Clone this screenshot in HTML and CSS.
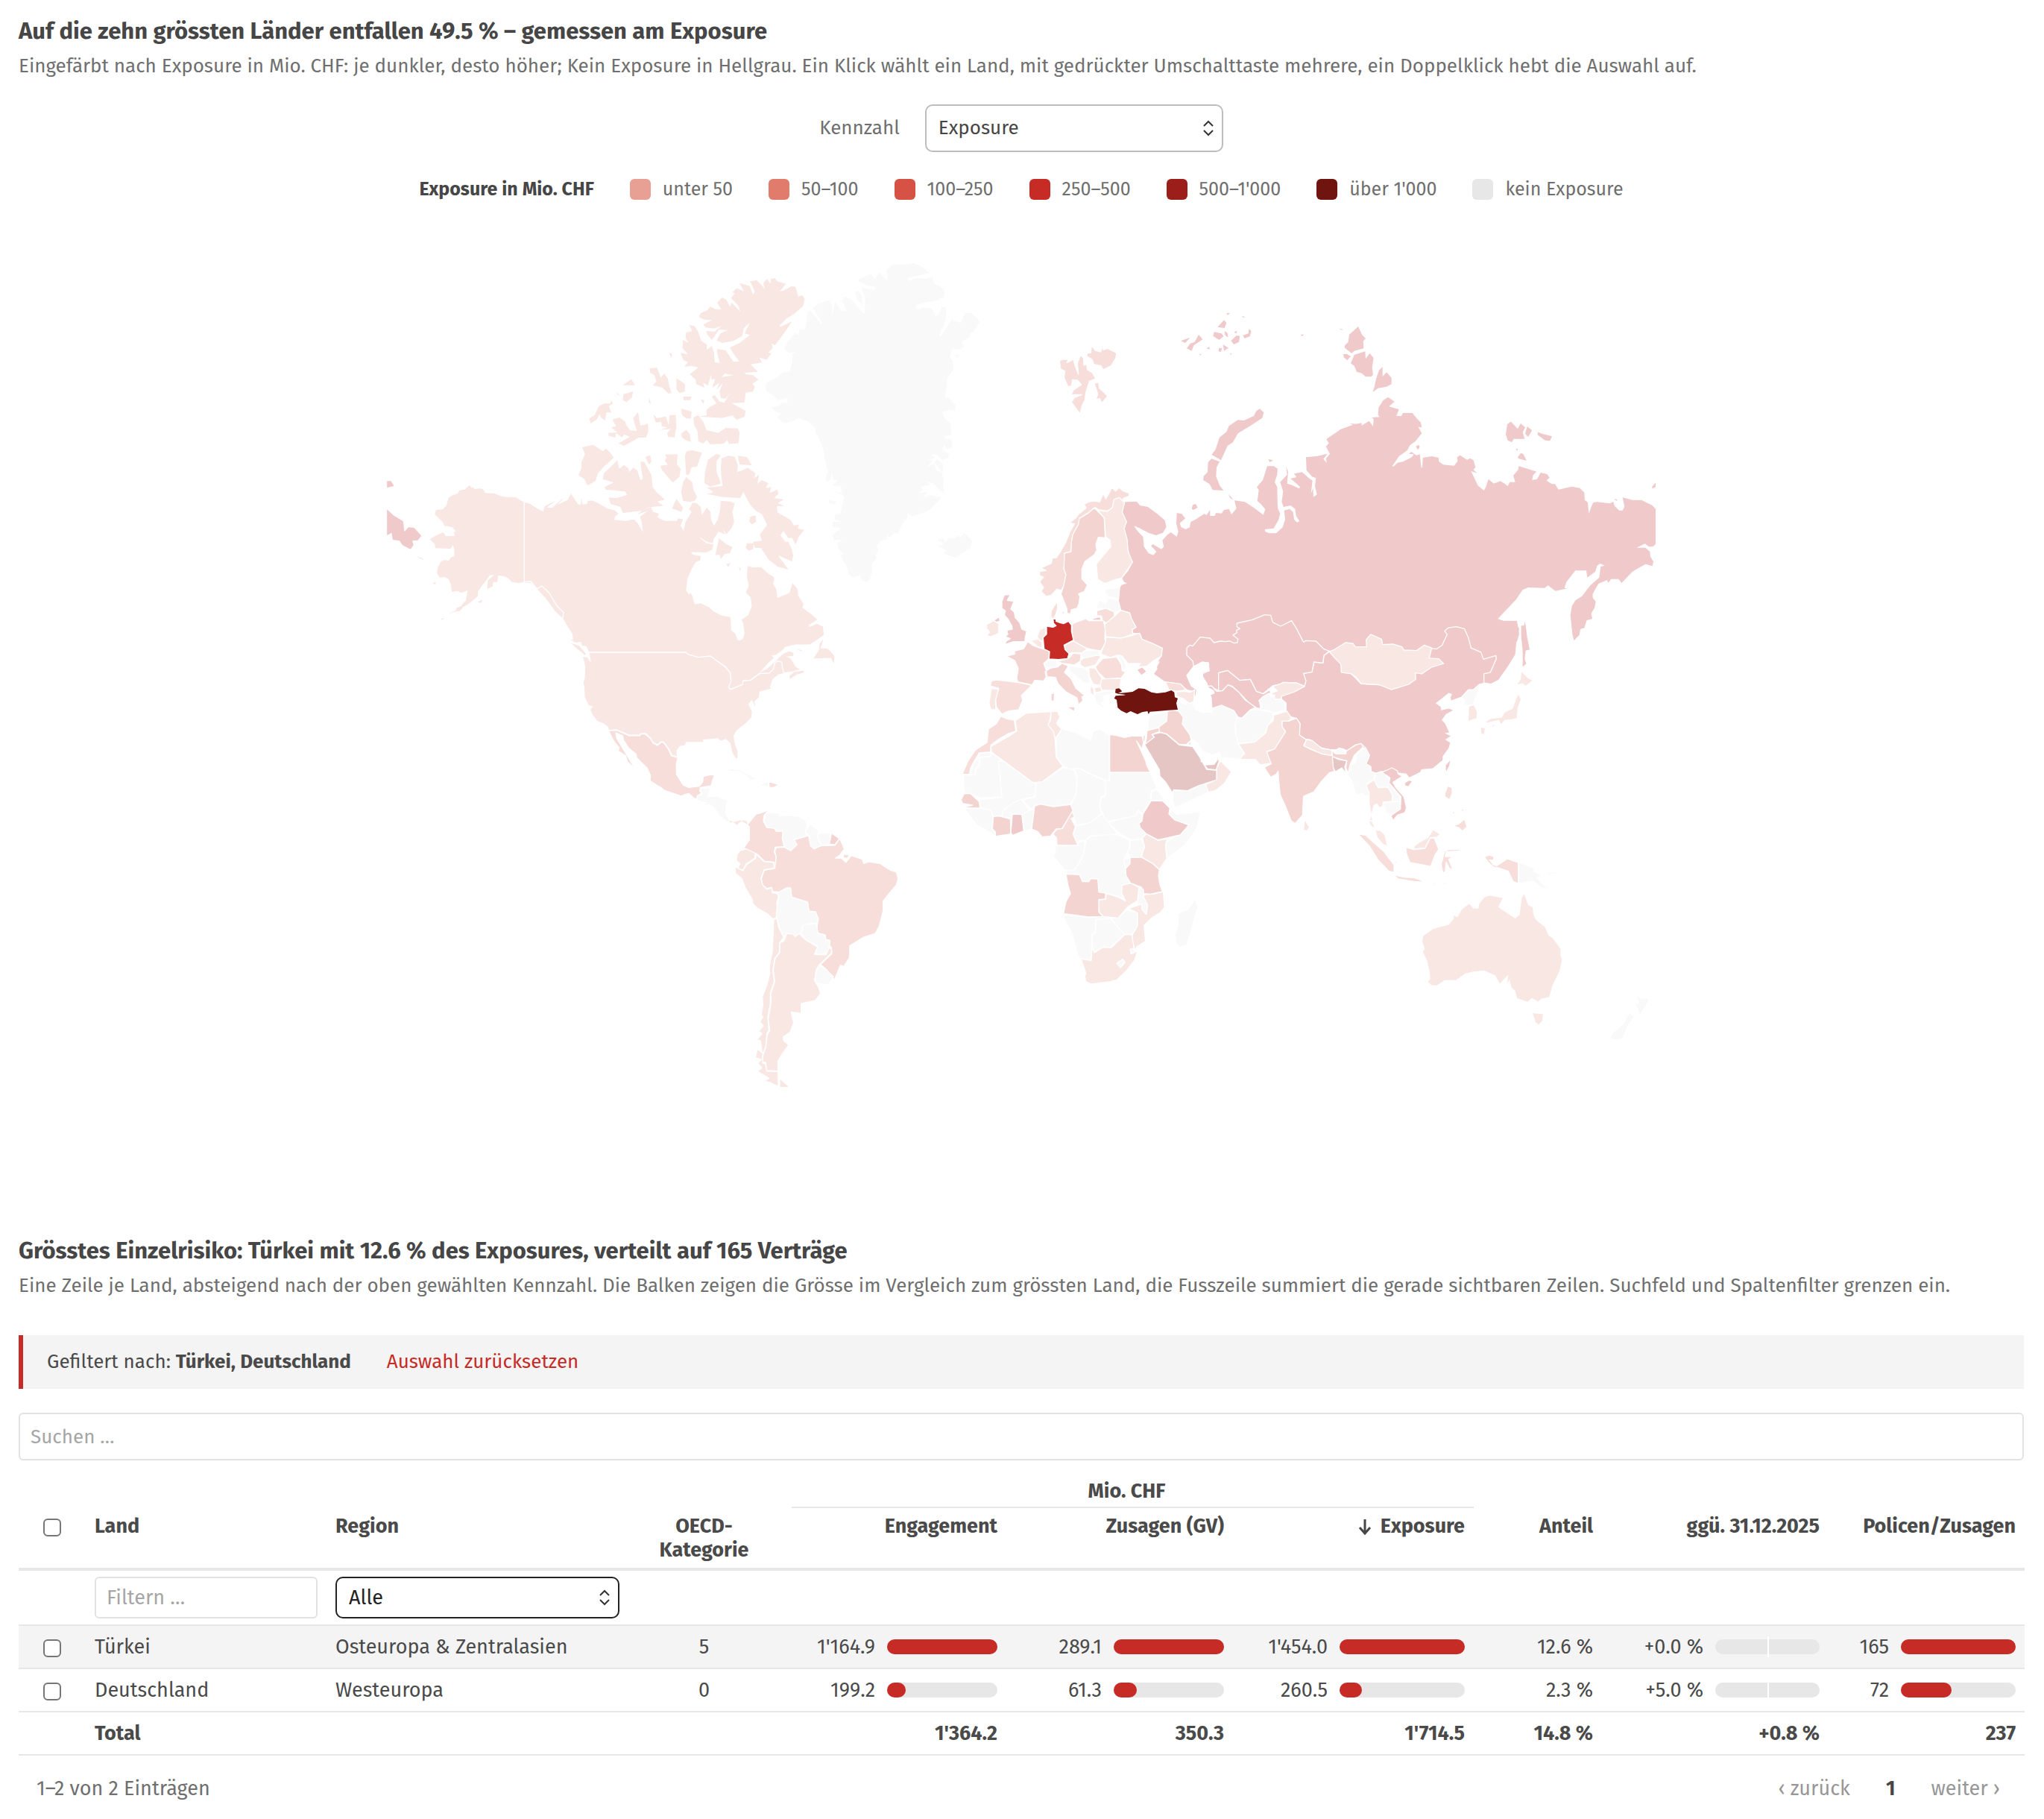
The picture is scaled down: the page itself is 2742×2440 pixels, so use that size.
FILE: index.html
```html
<!DOCTYPE html>
<html lang="de">
<head>
<meta charset="utf-8">
<title>Länderrisiken</title>
<link rel="stylesheet" href="styles.css">
</head>
<body>
<main class="page">
<section>
<h2 class="title">Auf die zehn grössten Länder entfallen 49.5 % – gemessen am Exposure</h2>
<p class="lead">Eingefärbt nach Exposure in Mio. CHF: je dunkler, desto höher; Kein Exposure in Hellgrau. Ein Klick wählt ein Land, mit gedrückter Umschalttaste mehrere, ein Doppelklick hebt die Auswahl auf.</p>
<div class="metric">
<label for="metric">Kennzahl</label>
<span class="select metric-select"><select id="metric"><option>Exposure</option></select><svg class="chev" viewBox="0 0 16 24"><path d="M2 9 8 3l6 6M2 15l6 6 6-6"/></svg></span>
</div>
<div class="legend">
<strong class="legend-title">Exposure in Mio. CHF</strong>
<ul class="legend-items">
<li><i class="swatch l1"></i>unter 50</li>
<li><i class="swatch l2"></i>50–100</li>
<li><i class="swatch l3"></i>100–250</li>
<li><i class="swatch l4"></i>250–500</li>
<li><i class="swatch l5"></i>500–1'000</li>
<li><i class="swatch l6"></i>über 1'000</li>
<li><i class="swatch l0"></i>kein Exposure</li>
</ul>
</div>
<svg class="map" viewBox="25 290 2690 1340" role="img" aria-label="Weltkarte nach Exposure">
<!-- Russia, mainland and islands -->
<g class="d flat" transform="translate(1380 380) scale(.33333)">
<path d="M388 880 400 880 434 878 448 894 480 900 520 930 548 954 554 980 540 1004 512 1014 482 1004 448 986 424 976 440 1000 460 1020 464 1060 482 1086 502 1094 514 1080 492 1056 500 1050 534 1070 544 1060 538 1034 560 1010 572 1002 596 1020 602 998 594 968 596 924 616 928 630 946 608 966 614 982 632 990 648 982 652 960 672 950 706 928 716 932 730 912 730 936 748 936 754 924 776 926 786 912 806 908 816 930 836 906 828 874 870 880 910 906 944 932 952 910 936 890 920 876 926 832 918 820 942 792 960 736 986 736 1002 746 1000 770 990 800 1000 820 1002 906 1012 926 1006 950 986 986 950 990 952 1000 970 1006 996 1006 1022 982 1032 950 1028 914 1050 908 1064 920 1068 950 1080 962 1090 958 1076 936 1072 908 1054 894 1026 900 1018 880 1024 838 1012 800 1040 770 1036 738 1044 760 1040 806 1060 812 1088 826 1092 820 1078 806 1054 786 1078 780 1068 766 1100 760 1130 786 1142 794 1136 846 1144 826 1146 860 1160 850 1152 816 1156 784 1140 778 1118 752 1116 700 1160 696 1202 686 1186 708 1200 722 1196 706 1212 686 1196 656 1208 644 1198 628 1214 616 1252 590 1280 580 1310 568 1340 562 1340 1500 440 1400 430 1380 412 1350 410 1330 400 1322 372 1314 364 1280 362 1240 370 1220 398 1210 382 1200 376 1186 400 1158 418 1124 402 1098 404 1080 394 1056 394 1030 384 986 394 960 376 936 376 910Z"/>
<path d="M612 232 650 218 630 240ZM684 206 700 226 664 250 656 272 636 262 650 242 668 236ZM760 176 786 148 796 160 788 180ZM746 196 776 202 784 214 766 228 742 212ZM788 192 800 200 802 218 790 208ZM814 232 836 210 850 212 846 236 826 246ZM862 210 884 202 886 184 896 192 890 214 868 222ZM782 246 804 260 786 272ZM766 260 778 262 774 276 764 274ZM796 120 810 120 800 128ZM716 262 726 256 730 266ZM826 196 838 192 836 202ZM686 286 696 284 692 290ZM810 282 818 282 814 288ZM858 132 872 136 864 138ZM1094 206 1108 206 1100 212ZM1248 182 1266 186 1260 188ZM1054 320 1066 324Z"/>
<path d="M930 505 946 520 940 542 888 576 842 604 822 640 800 654 784 690 774 712 736 690 752 668 768 620 796 598 806 574 842 550 866 552 906 534 916 514ZM736 706 768 718 756 740 754 778 770 816 784 834 740 832 728 808 702 792 704 776 720 760 722 720ZM804 848 824 872 810 864ZM660 892 672 888 680 902 664 912 656 908ZM964 708 984 712 970 720Z"/>
</g>
<g class="d flat" transform="translate(1800 400) scale(.33333)">
<path d="M-10 530 0 526 46 510 32 504 60 506 80 512 110 494 126 516 128 486 120 480 152 478 146 470 148 440 166 412 186 398 212 416 190 436 206 440 230 448 220 474 240 474 246 462 284 462 302 484 318 500 322 520 308 518 322 544 296 576 274 592 264 612 230 636 202 678 210 676 224 662 246 658 282 640 290 628 270 626 280 618 300 632 314 628 320 682 324 682 326 642 362 636 390 642 390 656 408 670 452 674 466 656 464 640 476 632 504 650 516 644 530 652 538 680 530 690 544 704 520 696 548 754 572 774 580 760 590 728 612 746 638 736 652 744 668 756 676 740 698 740 690 714 710 690 712 676 740 684 784 698 770 712 766 732 786 728 800 702 826 708 836 722 824 734 846 748 858 748 872 770 926 758 958 764 976 782 978 812 990 822 994 866 1004 840 1012 822 1028 820 1080 826 1092 818 1098 836 1116 854 1130 854 1138 838 1130 802 1170 812 1206 812 1250 834 1263 848 1263 990 1252 1000 1236 1000 1220 988 1186 1004 1222 1004 1240 1020 1242 1040 1254 1060 1250 1078 1222 1070 1170 1100 1126 1146 1114 1130 1084 1130 1072 1146 1068 1134 1034 1148 1026 1160 1010 1190 1010 1206 1022 1220 1018 1244 1004 1268 1008 1290 986 1296 976 1326 960 1332 956 1356 934 1376 926 1330 920 1276 926 1240 940 1216 966 1200 1000 1156 1036 1124 1042 1080 1058 1076 1040 1068 1028 1076 1020 1100 988 1124 984 1096 940 1096 904 1142 896 1166 908 1168 860 1178 830 1156 816 1166 750 1164 728 1174 700 1214 662 1254 628 1290 650 1298 652 1314 670 1320 684 1304 700 1308 714 1330 706 1380 -10 1380Z"/>
<path d="M66 114 82 148 96 162 86 174 88 202 50 212 40 222 12 200 12 190 26 176 30 146ZM6 226 20 224 36 234 22 250 8 238ZM36 262 50 228 94 214 96 244 112 222 128 240 122 280 126 308 118 316 96 316 80 302 60 296 50 272ZM150 290 164 276 164 316 180 298 200 320 200 346 180 356 146 362 124 378 132 354 138 324ZM680 496 708 526 720 504 738 520 728 540 736 566 692 566 684 580 668 572 660 548 666 508ZM746 516 766 532 750 558 738 546ZM790 538 800 544 846 556 838 574 818 572 788 550ZM708 640 720 624 730 626 744 654 712 646ZM1263 742 1248 760 1250 766 1263 760ZM298 596 310 590 314 600 306 610ZM700 606 708 606 706 616ZM1096 808 1108 810 1106 816ZM226 366 236 368ZM738 1302 742 1340 746 1384 728 1384 722 1350Z"/>
</g>
<g class="d flat" transform="translate(1270 780) scale(.33333)">
<path d="M722 8 704 14 694 30 692 50 694 80 704 114 736 124 746 150 762 184 746 196 750 206 780 210 786 232 830 250 868 268 866 300 850 322 858 322 846 344 848 352 834 372 852 384 886 408 914 410 950 422 970 436 982 438 1100 440 1100 0ZM768 356 786 346 802 362 784 376Z"/>
</g>
<path class="d flat" transform="translate(1570 800) scale(.33333)" d="M0 0H1030V300H300L100 400 84 376Z"/>
<g class="d flat" transform="translate(1790 840) scale(.33333 .3635)">
<path d="M300 -20 735 -20 744 30 732 62 728 104 700 146 660 198 630 212 604 208 300 120ZM752 -2 770 -2 776 40 786 86 770 90 766 120 772 138 758 150 758 90 752 40ZM956 -2 1006 -2 1006 6 988 8 986 24 966 52 958 30Z"/>
<path d="M0 120 -40 120 -40 440 0 450 122 448 140 462 142 490 128 506 150 520 160 540 192 534 232 524 256 540 290 544 302 558 346 538 350 528 396 524 436 494 436 480 460 450 466 430 446 418 468 406 444 394 462 392 446 360 432 346 450 324 478 310 460 304 430 310 428 298 408 284 430 268 460 246 474 250 468 262 470 274 512 260 540 234 560 234 584 214 602 208 602 176 628 170 652 120 650 108 600 122 590 96 550 80 540 44 524 10 492 2 458 6 444 18 454 30 434 70 412 84 396 82ZM284 580 300 570 312 572 298 590 286 588ZM466 496 462 516 450 536 448 514Z"/>
</g>
<!-- China west, Central and South Asia -->
<g transform="translate(1570 800) scale(.33333)">
<path class="d" d="M640 222 688 270 690 302 726 310 768 352 840 356 760 480 820 640 784 606 766 592 744 598 706 626 706 618 690 612 664 618 640 616 610 610 580 594 560 576 544 574 518 558 522 512 506 490 466 480 466 430 448 414 446 400 470 394 506 380 540 362 544 340 536 310 570 304 578 264 614 268 618 238Z"/>
<path class="d flat" d="M700 305 726 313 768 356 840 358 900 376 900 690 852 704 824 710 808 708 808 684 790 676 804 640 786 606 766 588 744 594 706 614 600 560 600 330Z"/>
<path class="d" d="M268 108 330 94 380 74 404 76 412 104 444 120 488 98 508 130 536 184 546 178 586 180 618 212 640 220 618 238 614 268 578 264 570 304 536 310 546 340 540 362 508 348 454 346 440 354 412 360 372 392 346 382 322 334 280 338 230 298 194 308 194 380 160 362 150 360 130 330 130 310 155 300 152 266 126 266 94 282 90 260 66 236 66 208 78 196 90 200 120 164 160 168 176 186 200 180 220 182 240 180 256 188 270 186 272 172 252 156 268 146 266 136 280 130 268 122Z"/>
<path class="d" d="M194 308 230 298 280 338 322 334 346 382 374 392 400 376 404 388 380 404 358 420 364 452 344 448 310 422 276 386 250 362 232 356 208 380 194 380ZM160 382 150 362 166 360 186 382 210 380 232 356 250 364 276 386 300 416 344 446 320 458 288 490 268 484 256 460 206 438 164 452Z"/>
<path class="a" d="M412 362 440 354 454 346 508 348 540 362 500 384 448 402 446 414 418 414 420 398 402 392 430 380Z"/>
<path class="n" d="M372 404 396 390 404 402 418 404 420 414 448 416 464 432 462 458 418 468 380 456 364 456 366 430 356 420ZM324 456 364 456 412 468 414 484 392 524 380 552 342 586 274 590 264 560 262 500 276 488 288 490Z"/>
<path class="a" d="M416 478 470 462 488 490 476 502 450 504 450 524 464 544 440 590 420 616 388 624 406 672 362 678 342 656 278 656 298 632 274 594 340 586 384 550 392 520 414 500Z"/>
<path class="n" d="M26 422 60 434 84 416 90 436 100 454 130 466 166 466 168 452 206 438 256 460 270 482 260 520 264 556 274 594 298 632 278 656 206 648 196 628 170 638 130 624 110 590 84 572 76 550 46 516 52 486 30 460Z"/>
<path class="c" d="M450 502 476 502 508 490 522 512 520 558 548 578 536 600 570 618 620 636 652 640 650 616 662 632 706 634 708 622 746 598 768 592 776 606 740 640 724 676 716 712 706 690 710 662 660 648 656 680 660 704 640 710 610 742 578 786 536 804 532 880 502 914 486 902 460 836 442 798 436 740 434 704 426 716 404 728 378 688 406 674 388 626 420 614 464 544 450 524Z"/>
<path class="a" d="M548 576 570 580 610 612 650 618 650 640 610 634 538 602ZM540 896 560 930 550 944 536 940Z"/>
<path class="n" d="M664 622 680 610 706 622 704 634 668 634Z"/>
<path class="e" d="M652 644 676 656 710 662 702 686 708 714 690 690 664 706 656 690Z"/>
<path class="n" d="M784 608 802 640 788 674 806 684 808 704 826 712 816 738 790 752 800 800 790 800 800 830 808 870 800 868 792 810 776 792 748 800 732 744 714 720 724 678 744 672 750 636Z"/>
<path class="n" d="M826 712 850 704 884 736 880 750 920 800 926 824 896 824 894 800 876 768 836 770 820 738ZM856 832 924 824 926 856 890 882 870 874Z"/>
<path class="a" d="M788 760 820 738 836 770 876 768 894 800 892 824 856 828 854 846 840 850 832 836 820 840 810 880 816 910 836 940 798 910 808 880 800 830 800 790Z"/>
<path class="d" d="M852 708 892 690 914 702 916 714 934 724 896 748 908 770 940 806 950 850 944 870 914 880 896 902 888 882 926 856 928 806 880 750 884 730Z"/>
<path class="a" d="M202 662 246 706 216 754 180 782 152 788 142 758 184 738 186 690Z"/>
<path class="e" d="M136 678 176 676 194 650 196 664 184 698 150 694Z"/>
</g>
<!-- Mongolia, East Asia and Oceania -->
<g transform="translate(1790 840) scale(.33333 .3635)">
<path class="line" d="M392 82 412 84 434 70 454 30 444 18 458 6 492 2 524 10 540 44 550 80 590 96 600 122 650 108 652 120 628 170 602 176 602 208"/>
<path class="a" d="M-20 94 0 86 46 60 76 64 84 76 130 76 128 50 146 30 190 48 194 68 236 66 272 76 280 88 330 90 362 70 392 80 382 118 420 120 440 138 390 152 352 176 326 172 328 196 300 214 230 234 180 216 108 212 90 190 68 176 28 170 26 140 0 116Z"/>
<path class="n" d="M512 262 540 234 560 234 584 214 580 240 556 290 520 294 524 276Z"/>
<path class="a" d="M540 296 562 290 576 316 574 340 538 352ZM752 166 780 190 800 200 770 222 756 212 732 218 748 196ZM740 246 752 270 740 300 736 340 720 344 686 348 670 364 662 348 600 360 628 340 672 336 686 316 716 304 730 270ZM588 372 608 376 604 400 590 398ZM622 374 648 358 644 370Z"/>
<path class="b" d="M456 590 474 596 474 616 464 640 486 652 446 630 444 620ZM474 684 486 686 478 696ZM508 672 520 676 518 688ZM484 706 490 694 486 710ZM454 660 464 668ZM476 736 500 730 524 712 534 740 516 756 502 744Z"/>
<path class="b" d="M94 766 126 772 168 806 200 832 214 850 240 880 240 908 220 904 176 862 140 810ZM240 918 280 926 320 928 344 936 362 944 320 942 256 932ZM366 944 380 946 378 950ZM390 948 410 946 408 952ZM420 948 452 946 448 952ZM434 962 450 966 448 970ZM498 968 512 960 506 970ZM288 816 320 824 364 820 386 782 402 782 410 800 420 824 406 842 388 886 340 878 304 872 290 838ZM444 830 460 824 512 824 500 830 450 832 446 850 478 850 460 860 478 900 462 892 450 870 446 908 436 908 430 880ZM530 880 542 882 536 886ZM560 878 594 880ZM552 816 560 826 554 830ZM604 852 622 844 642 850 640 864 624 862 640 880 654 884 696 858 740 872 740 950 720 942 700 904 660 892 640 888 620 872ZM240 862 252 872 246 876Z"/>
<path class="a" d="M320 812 344 796 376 780 398 750 426 768 414 778 386 780 366 818 322 822ZM164 752 186 754 204 770 214 812 196 806 172 780ZM150 716 166 748 148 738 138 722Z"/>
<path class="n" d="M742 872 800 890 806 906 834 920 816 928 846 958 872 972 836 966 800 940 742 950ZM850 910 886 908 900 894 888 914 860 916ZM514 960 540 950 524 962ZM944 918 950 924ZM1076 1114 1104 1136 1090 1128ZM1260 1074 1272 1076ZM412 716 436 698Z"/>
<path class="a" d="M764 984 782 1028 800 1036 802 1060 812 1082 850 1110 864 1140 880 1150 912 1190 912 1216 918 1230 908 1272 880 1326 866 1370 834 1376 820 1388 796 1374 778 1388 734 1374 726 1346 712 1336 704 1308 692 1330 698 1290 666 1322 646 1290 602 1272 560 1276 526 1284 490 1308 444 1308 412 1328 390 1326 374 1312 384 1302 382 1276 372 1236 354 1200 362 1190 352 1164 356 1142 396 1116 460 1100 478 1080 480 1064 494 1072 512 1044 544 1022 560 1040 578 1040 582 1022 604 998 626 992 680 1002 662 1036 728 1076 744 1064 752 1004ZM796 1426 842 1430 838 1458 822 1472 808 1462Z"/>
<path class="n" d="M1204 1330 1222 1364 1232 1374 1270 1376 1250 1406 1230 1436 1224 1418 1210 1396 1226 1388ZM1188 1426 1208 1440 1180 1478 1160 1520 1136 1528 1108 1520 1120 1500 1160 1470Z"/>
</g>
<!-- Scandinavia and Svalbard -->
<g transform="translate(1380 380) scale(.33333)">
<path class="b" d="M124 310 140 306 160 306 154 320 180 306 186 330 200 366 196 320 208 290 220 300 222 330 234 326 236 348 256 360 270 384 244 394 230 440 226 470 214 494 207 526 172 478 184 460 214 448 170 448 180 430 212 408 196 390 176 388 172 414 158 416 142 378 146 354 128 344ZM252 250 268 270 290 276 296 250 300 268 318 262 354 280 350 302 332 332 300 348 290 332 262 326 256 308 232 292 238 280 250 280ZM264 402 282 398 284 422 300 436 318 454 294 482 286 464 270 468 278 446Z"/>
<path class="b" d="M44 1160 70 1156 50 1146 92 1126 94 1106 112 1104 128 1080 150 1040 166 1000 184 968 164 964 190 944 200 930 232 904 222 890 240 880 262 876 286 880 300 846 310 868 326 840 334 822 350 836 364 822 380 836 404 844 404 856 380 866 386 880 364 864 344 870 336 904 316 916 284 912 264 904 236 926 204 946 202 976 178 1010 168 1080 146 1086 142 1150 150 1172 146 1210 130 1236 114 1230 90 1256 70 1260 50 1240 60 1224 44 1200 60 1182 44 1176Z"/>
<path class="c" d="M264 904 304 944 308 1024 280 1022 270 1050 274 1074 264 1092 226 1120 214 1150 214 1190 236 1214 224 1240 200 1250 206 1260 202 1290 194 1308 172 1314 168 1330 154 1328 154 1310 130 1250 140 1220 150 1172 142 1150 144 1086 170 1080 172 1040 178 1010 200 970 204 946 238 926ZM230 1276 238 1272 232 1286Z"/>
<path class="a" d="M268 902 284 914 316 918 336 904 344 870 364 862 386 884 376 920 394 960 384 986 396 1030 400 1080 418 1122 374 1186 350 1192 306 1208 278 1192 272 1130 330 1060 328 1034 310 1022 304 944Z"/>
<path class="n" d="M310 1230 366 1224 362 1270 320 1262 306 1240ZM274 1308 276 1290 288 1276 310 1290 322 1266 360 1276 370 1316 346 1326 322 1310Z"/>
</g>
<!-- Europe -->
<g transform="translate(1270 780) scale(.33333)">
<path class="b" d="M506 170 560 150 572 158 630 158 638 190 636 232 640 244 620 280 566 270 510 240 504 204ZM604 118 640 108 674 122 674 144 644 168 626 156 624 140 604 136ZM444 322 490 310 510 288 540 292 538 320 514 336 470 330ZM628 310 684 304 704 336 706 358 720 364 702 388 640 394 610 366 598 344ZM880 404 940 412 964 436 924 442 894 434ZM180 400 200 396 286 406 342 418 300 460 306 476 290 516 246 522 222 534 200 506 196 470 210 430 176 420ZM420 120 444 80 446 106 440 130 430 150 420 144ZM462 126 472 118 474 134Z"/>
<path class="a" d="M474 258 510 240 566 272 542 288 510 286 490 290 478 276ZM180 430 208 434 196 480 198 516 178 516 170 490ZM188 158 210 170 208 210 176 222 160 218 172 204 162 190 160 174ZM364 222 374 194 400 184 398 212 386 240 374 236ZM338 238 366 232 384 244 384 268 366 262ZM674 140 700 116 736 126 744 150 762 184 746 194 750 212 700 228 640 222 636 172ZM640 240 640 224 700 228 750 216 776 208 786 232 830 250 868 268 864 300 830 320 806 340 770 346 780 330 730 330 704 300 686 296 660 306 620 292ZM538 318 556 306 600 296 622 300 598 336 556 348 536 334ZM572 348 596 348 624 388 618 418 590 414 574 380ZM624 392 702 390 696 430 666 440 624 436 618 416ZM578 418 592 432 592 462 578 448ZM594 428 620 424 624 442 598 448ZM924 444 958 442 980 446 998 436 994 484 976 490 950 470 924 462Z"/>
<path class="n" d="M544 288 568 276 616 278 616 294 556 308 540 300ZM392 330 410 316 440 318 446 340 424 350 396 344ZM688 296 706 300 724 344 708 360 704 330ZM494 340 556 348 572 366 576 410 560 412 490 356ZM594 462 600 448 660 438 676 446 650 456 630 460 636 480 620 490 640 510 620 504 602 488Z"/>
<path class="c" d="M326 242 352 260 412 280 412 310 390 330 400 356 404 380 390 400 354 398 344 416 286 404 282 390 288 350 274 318 240 300 274 292 272 280 310 270ZM396 362 420 348 446 344 464 330 490 340 482 352 474 366 500 390 520 430 556 460 544 464 548 480 530 496 524 468 480 444 448 412 438 386 412 384 400 384ZM482 504 516 504 514 524ZM420 452 434 448 432 482 420 480ZM426 420 434 418 430 434Z"/>
<path class="d" d="M232 54 256 52 244 76 270 80 258 110 272 124 276 146 294 166 302 192 322 200 316 226 314 242 270 242 232 254 240 240 256 230 236 222 246 212 242 196 264 192 262 178 246 150 232 136 236 118 222 108 222 80ZM190 156 212 142 214 160 200 164ZM584 150 616 142 622 156 590 156Z"/>
</g>
<!-- Africa and the Middle East -->
<g transform="translate(1270 940) scale(.33333)">
<path class="n" d="M62 298 94 296 110 250 130 228 130 212 178 208 178 224 132 226 130 262 116 270 114 296ZM66 300 116 298 118 270 132 262 132 228 178 224 180 210 230 242 208 244 222 386 136 392 98 374 72 372ZM180 208 346 328 358 332 356 386 304 396 268 410 230 440 220 462 188 466 176 440 140 436 130 400 222 388 208 244 228 240ZM360 330 386 324 470 268 510 278 526 300 520 380 496 416 430 424 376 416 354 422 340 436 304 400 354 388ZM512 278 530 272 640 324 638 382 620 390 616 430 624 454 580 490 530 502 518 490 500 420 520 380 524 310ZM656 290 820 290 846 352 822 366 822 400 800 430 786 456 770 438 758 464 700 476 642 486 614 420 622 386 638 382 640 322 654 320ZM650 490 700 476 760 462 772 440 786 462 780 500 804 536 780 558 740 560 690 530ZM440 150 464 112 520 128 580 158 590 122 616 114 654 138 654 320 640 322 530 270 500 276 468 262 442 226Z"/>
<path class="n" d="M68 432 136 432 176 440 186 466 182 516 194 526 194 544 150 514 120 500 86 452ZM222 460 230 440 268 410 300 396 330 440 304 458 262 456 260 472 226 468ZM304 458 340 438 354 440 342 516 312 524ZM520 504 580 490 624 456 688 536 640 540 580 546 560 562 528 570 510 540ZM440 582 528 582 530 564 556 562 552 616 530 660 512 680 478 684 430 628ZM562 560 580 542 680 538 736 560 738 590 712 640 722 700 738 732 708 742 704 770 722 804 690 786 640 774 612 770 608 716 580 716 572 728 548 726 536 698 480 696 480 682 516 680 550 618ZM740 562 784 556 796 582 784 628 738 630 730 610ZM824 366 846 356 900 430 870 402 822 400ZM908 440 926 458 1022 446 1008 510 960 580 886 632 882 570 920 546 940 540 978 500 920 482 896 456ZM712 640 738 632 736 658 720 674ZM470 862 570 872 650 868 658 876 598 880 598 934 584 938 582 1046 540 1038 528 1024 506 940 474 880ZM600 882 660 876 696 920 716 938 660 992 628 990 594 1012 586 986 586 938 598 934ZM662 876 690 872 726 842 768 854 768 906 746 942 714 938 690 914ZM1000 796 1012 836 1002 856 980 940 966 984 942 990 922 978 918 940 932 900 930 858 974 836ZM908 362 970 362 1012 342 1040 334 1054 368 960 412 918 432 910 400ZM814 62 888 40 886 82 852 106 820 120 808 122Z"/>
<path class="b" d="M218 62 240 72 272 78 278 122 248 132 210 154 178 178 176 206 130 210 110 244 96 270 92 296 62 296 86 242 116 198 162 168 168 114 200 92ZM504 442 514 468 500 474 518 506 508 536 528 582 444 580 442 552 428 536 444 516 466 514Z"/>
<path class="a" d="M276 80 320 50 420 44 416 74 408 98 430 124 436 156 440 226 468 264 384 326 348 330 180 206 178 184 248 144 282 122ZM420 44 446 42 456 66 442 90 462 114 438 152 428 122 408 98 418 76ZM788 552 804 536 850 562 888 556 880 580 886 634 856 678 830 656 784 628 796 588ZM706 742 742 734 774 752 768 804 730 828 690 874 630 868 614 850 612 802 640 798 642 776 690 790 720 806 704 774ZM792 780 830 778 872 768 876 832 860 852 830 870 794 904 800 968 764 990 756 1012 746 944 768 906 768 854 732 836 784 818 800 858 808 832 792 800ZM540 1038 582 1046 586 988 594 1014 628 992 662 994 716 942 744 940 756 1000 766 1014 756 1044 724 1086 686 1122 660 1130 582 1140 560 1130 556 1108 560 1096ZM966 170 986 166 984 182Z"/>
<path class="c" d="M70 374 96 374 130 406 134 432 66 430 104 420 64 414 58 398ZM188 466 210 464 256 476 258 536 196 546 196 528 184 516ZM354 424 376 416 430 426 498 418 508 440 486 478 464 514 440 516 418 544 384 548 366 526 342 516ZM738 630 784 630 830 656 856 680 852 704 858 740 868 768 820 778 792 776 784 750 740 734 722 704 720 676 738 656ZM480 698 534 700 546 728 572 728 580 716 608 718 612 770 640 774 638 798 612 800 612 850 628 868 570 870 480 858 470 858 480 808 498 776 488 740ZM656 136 684 140 716 148 742 142 786 142 792 166 786 194 764 162 800 240 806 262 820 288 656 288ZM888 42 912 38 934 42 952 66 948 94 978 136 984 158 964 176 936 176 886 134 856 126 854 106 886 82ZM806 120 854 108 856 124 826 136 838 152 798 176 804 150ZM792 138 800 136 796 170 790 160Z"/>
<path class="d" d="M264 456 302 458 310 524 264 542 258 530 262 490ZM822 404 836 402 870 404 898 432 894 456 918 480 974 500 940 540 886 552 850 560 804 536 780 512 774 494 786 484 790 456Z"/>
<path class="e" d="M796 176 836 146 826 136 860 128 884 134 936 178 990 184 1020 230 1046 276 1086 280 1086 318 1012 342 970 362 914 358 908 370 880 326 858 304 856 278ZM1024 230 1030 236 1024 246Z"/>
<path class="n" d="M776 750 792 760 792 790 808 820 804 860 786 840 784 820 766 818ZM684 1056 708 1040 718 1052 700 1074ZM738 1000 750 996 756 1014 742 1018Z"/>
</g>
<!-- Caspian Sea -->
<path class="sea" transform="translate(1570 800) scale(.33333)" d="M66 318 92 284 128 264 154 268 156 300 130 304 128 320 148 352 150 366 174 380 176 390 160 396 150 394 164 404 168 460 130 468 104 456 92 436 102 406 106 376 84 360Z"/>
<!-- Selected countries -->
<g transform="translate(1270 780) scale(.33333)">
<path class="t flat" d="M680 432 694 430 706 442 690 450 716 448 748 444 772 430 796 432 824 446 846 450 880 446 904 438 916 446 918 466 930 470 924 490 930 516 890 518 848 522 818 524 812 534 808 522 786 526 768 534 740 522 724 530 702 520 688 508 684 476 674 470 680 460 712 458 720 456 690 452 678 448Z"/>
<path class="g" d="M428 150 440 152 440 160 456 166 470 170 490 160 502 176 502 200 510 236 472 256 476 274 492 290 486 310 450 314 412 312 414 282 392 272 388 226 402 212 402 180 428 184 440 178 430 168Z"/>
</g>
<!-- Greenland and Iceland -->
<g class="n flat" transform="translate(1000 340) scale(.33333)">
<path d="M566 70 590 44 640 44 680 38 710 54 742 78 700 88 654 98 658 112 690 98 724 102 752 94 760 124 784 132 802 156 796 176 770 190 720 198 688 206 690 226 720 218 750 222 766 252 780 240 790 216 808 216 806 268 780 328 784 338 832 262 840 272 866 280 884 240 910 240 944 272 918 314 904 320 904 336 870 356 880 374 860 388 832 384 822 418 836 432 838 466 810 506 810 536 802 580 820 580 846 612 846 634 820 628 790 640 806 668 824 680 830 730 796 738 812 748 828 746 834 778 812 788 798 768 792 790 820 808 816 820 794 830 768 810 748 806 764 824 720 832 754 832 732 858 760 846 768 872 794 884 760 840 772 828 796 850 792 886 798 910 794 940 800 962 788 960 760 928 724 914 742 930 702 940 716 950 698 964 730 960 716 984 740 972 790 982 768 1004 736 1036 670 1058 652 1046 650 1066 636 1082 614 1126 600 1124 578 1144 568 1124 572 1148 542 1156 526 1180 536 1190 524 1214 528 1228 508 1248 510 1276 500 1310 486 1324 470 1316 460 1296 436 1304 414 1290 412 1268 402 1252 382 1214 396 1210 374 1190 370 1164 390 1150 358 1156 350 1130 384 1106 350 1098 352 1080 390 1080 358 1070 360 1052 384 1046 388 1020 396 982 384 968 344 952 388 966 384 936 350 934 372 912 356 912 346 880 346 906 326 922 324 900 334 880 328 860 316 820 314 790 306 766 282 718 284 704 250 676 210 662 196 674 160 682 148 678 128 660 144 646 120 636 104 620 136 612 150 600 168 606 170 580 130 590 110 570 84 556 80 530 94 514 126 500 154 478 178 474 188 440 190 404 200 396 178 400 158 388 164 364 184 342 200 318 214 330 218 304 240 306 246 270 250 234 262 230 306 286 308 280 272 218 300 200 336 188 348 206 350 256 360 196 388 234 408 230 388 190 400 172 430 188 474 242 480 240 482 176 466 138 520 148 524 134 490 128 454 112 456 104 504 82 520 102 540 74 568 110 574 90ZM442 156 454 150 470 172 470 206 448 182ZM334 990 370 1000 356 1010 334 1002ZM842 412 858 404 856 422Z"/>
<path d="M780 1136 800 1150 804 1164 820 1144 846 1146 858 1134 864 1146 880 1124 912 1156 908 1184 846 1224 796 1208 808 1196 774 1176 800 1170 772 1152 794 1146Z"/>
</g>
<!-- Alaska, Canada and the Arctic islands -->
<g class="a flat" transform="translate(500 340) scale(.40816 .33333)">
<path d="M498 1002 515 1006 540 1026 560 1038 566 1016 600 996 572 1022 590 1024 620 990 628 984 606 1012 640 992 652 966 664 990 676 1010 684 1010 686 984 690 1010 704 1008 706 996 722 994 746 1008 770 1026 796 1034 808 1048 796 1058 794 1072 830 1076 858 1070 870 1084 888 1122 884 1080 878 1060 904 1036 890 1042 870 1050 884 1036 914 1020 922 1040 940 1046 936 1062 960 1076 1000 1076 1004 1066 1020 1070 1012 1096 1022 1116 1028 1080 1048 1040 1040 1030 1050 1004 1064 1004 1078 1020 1082 1052 1098 1022 1110 1040 1112 1070 1122 1096 1134 1070 1142 1030 1144 996 1176 998 1190 1006 1182 1040 1188 1080 1180 1104 1162 1130 1150 1106 1158 1130 1136 1120 1128 1136 1120 1150 1118 1166 1098 1160 1074 1140 1080 1150 1098 1166 1120 1170 1116 1192 1096 1204 1072 1202 1046 1202 1052 1212 1078 1218 1076 1236 1062 1242 1048 1270 1034 1310 1030 1356 1040 1374 1044 1364 1052 1382 1058 1412 1078 1408 1106 1424 1120 1440 1144 1456 1176 1464 1178 1516 1192 1530 1200 1560 1216 1552 1222 1530 1218 1490 1212 1474 1234 1456 1246 1420 1242 1384 1226 1364 1236 1338 1230 1300 1232 1258 1250 1264 1276 1262 1300 1288 1320 1304 1316 1330 1326 1350 1330 1386 1350 1376 1370 1366 1380 1326 1396 1350 1398 1376 1416 1410 1412 1426 1440 1450 1462 1474 1434 1494 1434 1504 1460 1490 1480 1502 1482 1536 1450 1564 660 1564 656 1530 640 1500 626 1470 600 1440 570 1390 540 1350 520 1326 498 1324Z"/>
<path d="M318 932 326 944 330 940 334 948 350 946 362 948 370 964 400 966 420 976 440 980 472 982 484 992 498 1002 498 1322 480 1326 458 1322 444 1306 430 1298 412 1296 410 1322 396 1322 394 1340 376 1350 378 1316 400 1292 384 1296 372 1318 362 1332 346 1360 346 1378 330 1396 312 1412 296 1424 288 1438 262 1444 248 1456 260 1442 274 1436 276 1426 290 1420 298 1406 306 1398 312 1356 290 1366 280 1358 260 1362 256 1330 250 1310 236 1302 220 1304 211 1286 214 1264 224 1240 236 1234 250 1236 256 1224 268 1218 268 1190 264 1174 256 1188 206 1186 204 1170 188 1150 206 1136 232 1122 240 1138 270 1136 266 1120 274 1120 262 1102 236 1096 228 1078 204 1050 208 1032 230 1030 242 1014 250 982 264 972 280 966 284 954 302 950ZM222 1472 236 1466 230 1474ZM142 1220 160 1224 170 1234ZM196 1326 208 1322 206 1332ZM344 1404 362 1392 356 1406Z"/>
<path d="M1206 120 1238 130 1250 164 1256 154 1240 112 1262 108 1280 130 1288 144 1284 118 1296 102 1308 122 1308 102 1322 100 1330 112 1358 122 1338 152 1350 150 1376 132 1390 134 1398 174 1412 168 1420 184 1414 212 1384 244 1360 262 1336 292 1342 294 1378 274 1350 324 1322 370 1312 362 1314 382 1300 398 1310 402 1294 428 1270 418 1280 438 1242 446 1266 476 1222 480 1226 486 1250 490 1268 508 1248 524 1256 536 1250 556 1226 560 1222 600 1180 602 1226 634 1222 656 1196 670 1182 652 1148 662 1120 660 1072 656 1098 652 1096 630 1110 616 1130 604 1114 576 1124 570 1140 596 1156 600 1174 560 1160 584 1144 582 1140 556 1150 522 1130 548 1140 520 1116 540 1126 502 1186 490 1166 486 1150 480 1142 450 1132 400 1132 384 1160 390 1186 436 1204 434 1184 400 1174 378 1206 360 1240 328 1222 322 1240 278 1220 300 1214 332 1186 352 1150 360 1130 350 1144 320 1168 308 1138 306 1120 340 1114 348 1100 326 1096 312 1124 314 1146 292 1122 302 1094 298 1086 286 1116 268 1090 266 1072 256 1078 240 1100 228 1110 214 1126 224 1146 226 1132 198 1148 178 1162 186 1174 214 1180 198 1210 236 1200 208 1178 180 1190 160 1182 156 1196 140 1220 152Z"/>
<path d="M1040 288 1058 292 1068 312 1080 352 1098 366 1098 388 1114 372 1122 400 1124 438 1140 440 1150 466 1160 480 1146 498 1114 508 1112 486 1102 532 1086 520 1090 540 1064 526 1060 506 1042 486 1070 458 1046 452 1024 456 1036 438 1020 428 1012 400 1036 406 1018 380 1020 348 1038 360 1028 340 1030 318 1050 312Z"/>
<path d="M910 462 934 460 942 482 946 500 958 484 970 504 974 530 982 562 972 564 952 540 920 530 932 516 926 490 912 480ZM998 502 1026 524 1026 556 1008 562 998 546ZM974 400 984 404 982 422ZM822 530 850 506 862 530ZM824 566 856 556 852 580 834 598 822 590ZM802 558 812 572 804 568ZM1020 576 1048 576 1044 590 1022 590ZM1078 586 1090 592 1086 606ZM906 578 916 606 908 600ZM784 592 790 604 776 614 784 640 768 640 764 672 750 660 746 646 736 668 716 684 712 664 730 650 742 616 760 604 780 604ZM788 668 810 660 830 676 832 688 846 712 868 714 862 690 856 664 872 638 876 670 880 692 894 690 904 684 906 716 898 740 872 742 850 758 826 774 808 764 830 748 846 738 826 728 820 740 800 724 798 740 776 734 774 722 804 720 784 700 800 696ZM922 648 934 662 964 656 972 690 976 650 996 650 998 700 992 740 970 738 968 722 980 706 944 710 970 700 950 696 948 678 930 680ZM1016 740 1014 724 1030 710 1042 726 1046 758 1030 752ZM1014 624 1048 636 1046 664 1030 664 1016 650ZM1054 660 1070 650 1088 680 1096 710 1136 722 1160 702 1200 704 1206 720 1202 764 1170 766 1166 750 1154 766 1108 768 1098 750 1086 764 1070 756 1068 716 1056 690Z"/>
<path d="M688 780 724 770 742 784 756 796 766 786 780 800 792 822 758 860 740 886 732 916 706 934 696 908 676 892 686 866 686 840 698 808ZM804 832 810 866 826 852 840 864 844 880 856 862 870 874 880 912 888 906 884 880 880 838 892 838 906 870 916 890 920 940 934 962 960 990 936 998 956 1016 930 1018 908 1022 884 1036 822 1044 814 1020 782 1008 776 982 800 984 836 972 830 958 766 950 762 940 792 922 756 908 760 884 790 850ZM896 818 912 812 916 838 908 850ZM960 834 966 822 960 810 1002 808 1000 850 1012 866 1008 900 986 922 970 900 950 870 946 854 970 850ZM1032 796 1050 792 1082 802 1066 858 1048 860 1040 890 1030 890 1026 812ZM1030 900 1050 920 1054 950 1066 980 1058 996 1044 1000 1020 996 1014 960 1020 920ZM998 988 1020 1024 1014 1040 984 1026Z"/>
<path d="M1130 806 1144 812 1130 836 1130 880 1140 910 1144 926 1110 938 1090 924 1092 880 1102 830ZM1146 824 1170 814 1190 818 1200 852 1198 880 1220 870 1232 862 1258 884 1254 904 1270 890 1264 928 1278 912 1300 924 1292 944 1310 940 1304 964 1330 950 1334 966 1320 984 1350 990 1332 1004 1352 1016 1328 1018 1330 1042 1356 1060 1374 1074 1384 1094 1400 1092 1398 1108 1418 1112 1400 1140 1390 1172 1378 1144 1366 1146 1350 1116 1340 1134 1356 1160 1366 1160 1376 1186 1382 1214 1378 1240 1332 1214 1366 1272 1330 1260 1300 1230 1284 1200 1276 1186 1256 1184 1250 1160 1280 1156 1272 1132 1296 1092 1280 1050 1260 1036 1240 1010 1218 960 1208 984 1150 980 1100 968 1120 960 1098 942 1150 936 1146 900 1144 870ZM1200 814 1230 820 1246 852 1206 850ZM1240 1060 1258 1054 1260 1080 1246 1090 1238 1080ZM1230 1166 1252 1166 1250 1190 1236 1196 1226 1184ZM1138 1146 1160 1168 1182 1182 1174 1206 1156 1210 1144 1230 1140 1212 1126 1214ZM1162 1250 1176 1246 1168 1262ZM1204 1262 1210 1268 1206 1278Z"/>
<path class="line" d="M498 1002V1322L520 1320 540 1350 556 1338 580 1366 604 1416 628 1446 622 1480"/>
<path class="d flat" d="M47 1030 68 1054 100 1078 104 1120 118 1102 136 1104 160 1136 148 1154 130 1156 134 1174 124 1190 98 1174 88 1156 66 1152 62 1124 47 1134ZM47 916 60 916 70 936 47 942Z"/>
</g>
<!-- United States to Tierra del Fuego -->
<g transform="translate(740 840) scale(.33333 .40816)">
<path class="a flat" d="M76 44 100 54 118 50 122 64 140 66 150 84 540 84 550 92 590 102 640 98 700 132 720 152 724 176 712 200 722 206 768 190 770 178 800 176 836 154 870 122 894 104 884 96 904 94 930 78 940 68 980 60 1040 60 1066 44 771 44 765 52 748 44ZM834 154 866 140 900 116 930 92 956 82 974 88 972 98 944 100 960 104 974 122 980 132 1000 142 970 148 936 152 900 154ZM1094 42 1082 72 1112 74 1138 98 1136 124 1124 104 1054 106 1076 78 1078 58ZM956 164 976 150 1014 146 1016 152 984 160 960 174ZM982 72 1008 80 1004 82ZM78 56 110 64 140 92 132 94 100 72Z"/>
<path class="a" d="M150 86 540 86 548 92 590 102 638 98 696 132 718 152 722 180 712 200 720 208 768 192 770 180 800 178 836 156 876 154 892 142 898 122 908 114 926 118 930 142 936 156 914 160 892 174 880 200 886 206 838 216 836 234 818 248 822 262 816 264 806 244 794 256 808 280 806 300 782 320 748 342 734 360 738 384 750 410 750 432 742 438 726 416 718 386 700 372 680 378 668 370 640 372 610 374 614 382 576 382 542 382 538 392 516 396 504 410 506 430 484 424 472 404 450 380 438 380 426 390 408 382 398 368 378 352 356 354 354 358 312 358 260 340 230 342 224 330 206 320 182 312 162 290 154 274 164 264 148 260 132 234 130 200 126 186 132 170 134 134 124 98 146 102 156 116Z"/>
<path class="b" d="M230 344 262 342 312 360 356 360 358 354 376 354 396 368 408 384 426 392 440 382 450 382 470 404 482 426 508 432 502 452 502 486 530 522 552 530 594 526 608 512 610 494 640 488 656 490 646 510 642 524 598 530 596 542 604 548 586 558 582 570 552 550 540 552 522 558 456 540 436 528 426 524 396 508 398 490 384 466 342 432 340 420 312 402 290 376 286 360 258 350 262 368 306 428 334 466 326 462 304 444 298 426 268 410 272 400 250 378ZM614 580 640 582 642 588 620 586ZM874 510 916 522 890 530 876 530Z"/>
<path class="n" d="M598 534 636 530 636 546 626 562 660 558 708 572 702 590 700 614 716 636 710 646 676 624 652 594 614 578 584 572 588 556 606 552ZM696 478 720 468 756 472 830 502 800 506 786 492 750 476ZM838 524 864 510 872 512 872 528ZM924 526 950 530 926 532ZM786 526 800 530 790 532ZM1030 1460 1070 1452 1056 1460Z"/>
<path class="a" d="M716 636 730 642 760 636 786 638 792 654 782 650 764 642 746 656 732 646 714 646Z"/>
<path class="n" d="M868 612 916 614 920 622 990 624 1020 636 1028 650 1022 674 1026 690 974 700 988 716 962 736 936 728 928 698 930 672 904 672 866 660 854 640 860 622ZM1038 650 1074 672 1070 690 1088 722 1052 732 1038 722 1040 692 1022 676ZM1076 680 1120 680 1120 716 1084 720 1070 692Z"/>
<path class="b" d="M876 604 856 620 852 640 866 662 896 664 904 674 930 674 928 698 936 724 900 726 896 742 904 756 900 796 892 792 896 776 856 772 826 748 800 744 774 728 796 702 796 660 788 652 822 618 840 614Z"/>
<path class="b" d="M1160 698 1178 732 1160 752 1142 762 1166 762 1184 776 1206 754 1250 766 1256 780 1276 774 1322 780 1364 802 1388 808 1394 830 1388 850 1356 880 1334 904 1334 936 1318 986 1302 1010 1256 1022 1200 1050 1198 1090 1176 1118 1162 1114 1138 1162 1106 1128 1082 1112 1128 1076 1126 1056 1118 1050 1120 1032 1104 1030 1100 1014 1070 1008 1068 986 1074 962 1062 938 1036 936 1030 906 966 890 962 860 944 860 918 874 888 872 886 858 866 862 848 850 844 830 856 802 898 796 904 758 898 740 904 728 936 726 962 738 988 718 976 702 1034 688 1042 722 1056 732 1084 722 1140 720ZM1174 750 1198 750 1190 764 1174 760Z"/>
<path class="c" d="M1126 680 1158 698 1140 718 1118 716Z"/>
<path class="a" d="M758 738 784 732 820 746 818 762 782 782 770 802 750 796 758 780 744 772 746 752ZM740 790 770 804 784 784 820 764 824 750 856 774 894 776 896 794 856 800 842 828 850 852 866 864 886 860 888 876 906 878 914 886 906 910 910 944 902 958 890 962 870 946 828 926 810 912 808 898 780 860 766 830 740 812Z"/>
<path class="n" d="M908 876 944 862 962 862 966 890 1030 908 1036 938 1062 940 1072 964 1066 978 1012 982 1004 1010 980 1020 950 1008 934 1020 916 990 904 946 914 888ZM1012 982 1040 976 1066 980 1072 1010 1100 1014 1104 1032 1120 1036 1114 1064 1100 1078 1058 1078 1072 1052 1024 1032 1004 1010ZM1074 1114 1106 1130 1134 1152 1112 1180 1064 1172 1060 1154Z"/>
<path class="a" d="M946 1010 972 1012 980 1020 996 1010 1024 1032 1070 1054 1058 1078 1104 1080 1116 1058 1126 1060 1126 1074 1078 1112 1064 1130 1058 1164 1076 1190 1082 1208 1060 1230 1004 1240 1004 1272 964 1268 974 1302 960 1334 932 1350 934 1362 954 1376 926 1408 910 1430 912 1462 864 1460 862 1434 848 1432 850 1412 862 1384 868 1342 878 1330 872 1290 884 1236 882 1206 898 1168 892 1130 900 1092 918 1072 918 1042 936 1034ZM918 1486 960 1516 918 1516Z"/>
<path class="a" d="M894 964 906 960 914 990 934 1022 918 1040 916 1072 898 1092 890 1130 896 1168 880 1206 880 1240 870 1284 874 1326 866 1340 862 1380 848 1412 850 1436 860 1438 866 1462 912 1464 912 1512 880 1500 852 1494 876 1486 828 1462 846 1452 830 1436 844 1424 820 1418 828 1390 848 1402 840 1362 826 1360 846 1340 834 1330 852 1314 838 1300 850 1284 844 1278 850 1244 848 1218 866 1180 878 1142 876 1120 888 1070 892 1000Z"/>
</g>
</svg>
</section>
<section>
<h2 class="title">Grösstes Einzelrisiko: Türkei mit 12.6 % des Exposures, verteilt auf 165 Verträge</h2>
<p class="lead">Eine Zeile je Land, absteigend nach der oben gewählten Kennzahl. Die Balken zeigen die Grösse im Vergleich zum grössten Land, die Fusszeile summiert die gerade sichtbaren Zeilen. Suchfeld und Spaltenfilter grenzen ein.</p>
<div class="filterbar"><span>Gefiltert nach: <strong>Türkei, Deutschland</strong></span><button class="reset" type="button">Auswahl zurücksetzen</button></div>
<input class="field search" type="search" placeholder="Suchen …" aria-label="Suchen">
<table class="grid">
<colgroup><col class="c-check"><col class="c-land"><col class="c-region"><col class="c-oecd"><col class="c-bar"><col class="c-bar"><col class="c-land"><col class="c-share"><col class="c-bar"><col class="c-count"></colgroup>
<thead>
<tr class="groups"><td colspan="4"></td><th colspan="3" scope="colgroup"><span class="group">Mio. CHF</span></th><td colspan="3"></td></tr>
<tr class="heads">
<th class="mid"><input type="checkbox" aria-label="Alle auswählen"></th>
<th scope="col">Land</th><th scope="col">Region</th><th class="mid" scope="col">OECD-<br>Kategorie</th>
<th class="num" scope="col">Engagement</th><th class="num" scope="col">Zusagen (GV)</th>
<th class="num" scope="col"><svg class="arrow" viewBox="0 0 18 22"><path d="M9 1v18M2 12l7 8 7-8"/></svg>Exposure</th>
<th class="num" scope="col">Anteil</th><th class="num" scope="col">ggü. 31.12.2025</th><th class="num" scope="col">Policen/Zusagen</th>
</tr>
<tr class="filters">
<td></td>
<td><input class="field small" type="text" placeholder="Filtern …" aria-label="Land filtern"></td>
<td><span class="select region-select"><select aria-label="Region filtern"><option>Alle</option></select><svg class="chev" viewBox="0 0 16 24"><path d="M2 9 8 3l6 6M2 15l6 6 6-6"/></svg></span></td>
<td colspan="7"></td>
</tr>
</thead>
<tbody>
<tr class="odd">
<td class="mid"><input type="checkbox" aria-label="Türkei auswählen"></td><td>Türkei</td><td>Osteuropa &amp; Zentralasien</td><td class="mid">5</td>
<td><div class="meter">1'164.9<span class="bar"><i style="width:100%"></i></span></div></td>
<td><div class="meter">289.1<span class="bar"><i style="width:100%"></i></span></div></td>
<td><div class="meter">1'454.0<span class="bar wide"><i style="width:100%"></i></span></div></td>
<td class="num">12.6 %</td>
<td><div class="meter">+0.0 %<span class="bar delta"></span></div></td>
<td><div class="meter">165<span class="bar count"><i style="width:100%"></i></span></div></td>
</tr>
<tr>
<td class="mid"><input type="checkbox" aria-label="Deutschland auswählen"></td><td>Deutschland</td><td>Westeuropa</td><td class="mid">0</td>
<td><div class="meter">199.2<span class="bar"><i style="width:17%"></i></span></div></td>
<td><div class="meter">61.3<span class="bar"><i style="width:21%"></i></span></div></td>
<td><div class="meter">260.5<span class="bar wide"><i style="width:18%"></i></span></div></td>
<td class="num">2.3 %</td>
<td><div class="meter">+5.0 %<span class="bar delta"></span></div></td>
<td><div class="meter">72<span class="bar count"><i style="width:44%"></i></span></div></td>
</tr>
</tbody>
<tfoot>
<tr><td></td><th scope="row">Total</th><td></td><td></td><td class="num">1'364.2</td><td class="num">350.3</td><td class="num">1'714.5</td><td class="num">14.8 %</td><td class="num">+0.8 %</td><td class="num">237</td></tr>
</tfoot>
</table>
<div class="pager">
<span>1–2 von 2 Einträgen</span>
<nav class="pages"><button type="button">‹ zurück</button><button class="current" type="button">1</button><button type="button">weiter ›</button></nav>
</div>
</section>
</main>
</body>
</html>
```
FILE: styles.css
```css
* { box-sizing: border-box; }
body { margin: 0; background: #fff; color: #4a4a4a; font: 26px/36px "Fira Sans", "Noto Sans", sans-serif; }
button, input, select { font: inherit; color: inherit; }
.page { padding: 22px 27px 0 25px; }
.title { margin: 0 0 9px; font-size: 31px; line-height: 40px; font-weight: 700; color: #464646; }
.lead { margin: 0; color: #6f6f6f; }

.metric { display: flex; justify-content: center; align-items: center; gap: 34px; margin-top: 33px; color: #6f6f6f; }
.select { position: relative; display: block; }
.select select { appearance: none; display: block; width: 100%; height: 100%; margin: 0; padding: 0 48px 0 16px; background: #fff; border: 2px solid #bdbdbd; border-radius: 10px; color: #464646; }
.metric-select { width: 400px; height: 64px; }
.chev { position: absolute; right: 12px; top: 50%; width: 16px; height: 24px; margin-top: -12px; fill: none; stroke: #333; stroke-width: 2; pointer-events: none; }

.legend { display: flex; justify-content: center; gap: 48px; margin-top: 32px; font-size: 25px; color: #6f6f6f; }
.legend-title { color: #464646; }
.legend-items { display: flex; gap: 48px; margin: 0; padding: 0; list-style: none; }
.legend-items li { display: flex; align-items: center; gap: 16px; }
.swatch { width: 28px; height: 28px; border-radius: 6px; }
.l0 { background: #e7e7e7; }
.l1 { background: #e8a095; }
.l2 { background: #e17c6c; }
.l3 { background: #d65245; }
.l4 { background: #c62b26; }
.l5 { background: #9b1e1a; }
.l6 { background: #701410; }

.map { display: block; width: 100%; margin: 18px 0 28px; }
.map path { stroke: #fff; stroke-width: 1.3; stroke-linejoin: round; vector-effect: non-scaling-stroke; }
.map .flat, .map .flat path { stroke: none; }
.map .line, .map .flat .line { fill: none; stroke: #fff; }
.a { fill: #f9e7e4; }
.b { fill: #f7deda; }
.c { fill: #f4d4d1; }
.d { fill: #f0caca; }
.e { fill: #e6c6c5; }
.n { fill: #f9f9f9; }
.g { fill: #c62b26; }
.t { fill: #701410; }
.sea { fill: #fff; }

.filterbar { display: flex; align-items: center; gap: 48px; margin-top: 48px; padding: 18px 32px; border-left: 6px solid #c62b26; background: #f4f4f4; }
.reset { padding: 0; border: 0; background: none; color: #c62b26; }
.field { display: block; width: 100%; height: 64px; padding: 0 14px; border: 2px solid #e2e2e2; border-radius: 6px; background: #fff; appearance: none; }
.field::placeholder { color: #a6a6a6; opacity: 1; }
.search { margin-top: 32px; }

.grid { width: 100%; margin-top: 16px; table-layout: fixed; border-collapse: separate; border-spacing: 0; font-size: 27px; }
.c-check { width: 90px; }
.c-land { width: 323px; }
.c-region { width: 405px; }
.c-oecd { width: 203px; }
.c-bar { width: 304px; }
.c-share { width: 172px; }
.c-count { width: 263px; }
.grid th, .grid td { padding: 0 12px; text-align: left; vertical-align: middle; border-bottom: 2px solid #e7e7e7; }
.grid th { font-weight: 700; }
.grid .num { text-align: right; }
.grid .mid { text-align: center; }
.groups th, .groups td { height: 48px; border: 0; }
.grid .groups th { padding: 0; vertical-align: bottom; text-align: center; border: 0; }
.grid .groups td { border: 0; }
.group { display: block; margin-left: 16px; padding: 4px 16px 0 0; border-bottom: 2px solid #e7e7e7; line-height: 42px; }
.grid .heads th { height: 84px; padding-top: 8px; padding-bottom: 8px; vertical-align: top; line-height: 32px; border-bottom: 4px solid #e7e7e7; }
.grid .filters td { height: 74px; }
.small { height: 56px; width: 100%; }
.region-select { height: 56px; }
.region-select select { border-color: #222; color: #222; }
.grid tbody td, .grid tfoot td, .grid tfoot th { height: 58px; }
.grid tfoot td { font-weight: 700; }
.odd { background: #f4f4f4; }
.arrow { width: 18px; height: 22px; margin-right: 12px; vertical-align: -3px; fill: none; stroke: #464646; stroke-width: 3; }
input[type="checkbox"] { appearance: none; width: 24px; height: 24px; margin: 0; border: 2px solid #767676; border-radius: 6px; background: #fff; vertical-align: middle; }
.meter { display: flex; justify-content: flex-end; align-items: center; gap: 16px; white-space: nowrap; }
.bar { position: relative; flex: none; width: 148px; height: 20px; border-radius: 10px; background: #e7e7e7; }
.bar i { display: block; height: 100%; border-radius: 10px; background: #c62b26; }
.wide { width: 168px; }
.delta { width: 140px; }
.count { width: 154px; }
.delta::after { content: ""; position: absolute; left: 50%; top: -4px; bottom: -4px; width: 2px; background: #fff; }

.pager { display: flex; justify-content: space-between; margin-top: 26px; padding: 0 32px 0 24px; font-size: 27px; color: #6f6f6f; }
.pages { display: flex; gap: 48px; }
.pages button { padding: 0; border: 0; background: none; color: #979797; }
.pages .current { color: #464646; font-weight: 700; }
```
